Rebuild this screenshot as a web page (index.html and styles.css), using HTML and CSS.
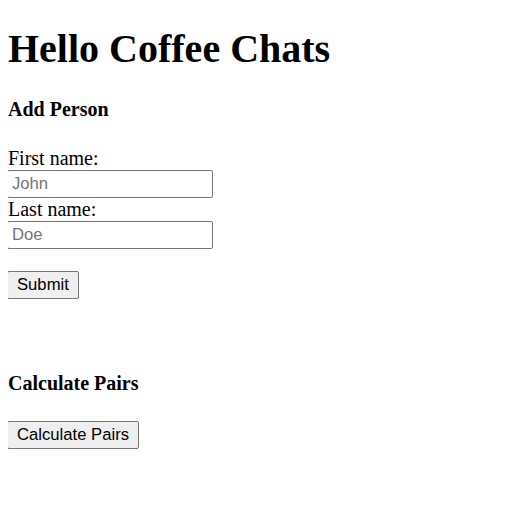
FILE: index.html
```html
<!DOCTYPE html>
<html>
<head>
<meta charset="utf-8">
<link rel="stylesheet" href="styles.css">
</head>
<body class="page">
<h1 class="title">Hello Coffee Chats</h1>
<h4 class="section-title section-title--first">Add Person</h4>
<form class="person-form">
<label class="label" for="fname">First name:</label>
<input class="field" type="text" id="fname" placeholder="John">
<label class="label" for="lname">Last name:</label>
<input class="field" type="text" id="lname" placeholder="Doe">
<div class="spacer"></div>
<input class="btn" type="submit" value="Submit">
</form>
<h4 class="section-title">Calculate Pairs</h4>
<button class="btn btn--block" type="button">Calculate Pairs</button>
</body>
</html>
```

FILE: styles.css
```css
.page {
  font-family: "Liberation Serif", "Times New Roman", serif;
  font-size: 20px;
  margin: 8px;
  color: #000;
  background: #fff;
}
.title {
  font-size: 40px;
  font-weight: bold;
  margin: 17px 0 26px;
}
.section-title {
  font-size: 20px;
  font-weight: bold;
  margin: 0 0 26px;
}
.section-title--first {
  margin-bottom: 26px;
}
.person-form {
  display: flex;
  flex-direction: column;
  align-items: flex-start;
  margin: 0 0 73px;
}
.label {
  display: block;
  height: 23px;
  line-height: 23px;
}
.spacer {
  height: 22px;
}
.field, .btn {
  font-family: "Liberation Sans", Arial, sans-serif;
  font-size: 16.667px;
  margin: 0 0 0 -1px;
}
.field {
  box-sizing: border-box;
  width: 206px;
  height: 28px;
  padding: 1px 4px;
  border: 1px solid #767676;
  border-radius: 2px;
  background: #fff;
  color: #000;
}
.field::placeholder {
  color: #757575;
}
.btn {
  box-sizing: border-box;
  height: 28px;
  padding: 0 9px;
  border: 1px solid #767676;
  border-radius: 2px;
  background: #efefef;
  color: #000;
}
.btn--block {
  display: block;
}
```
